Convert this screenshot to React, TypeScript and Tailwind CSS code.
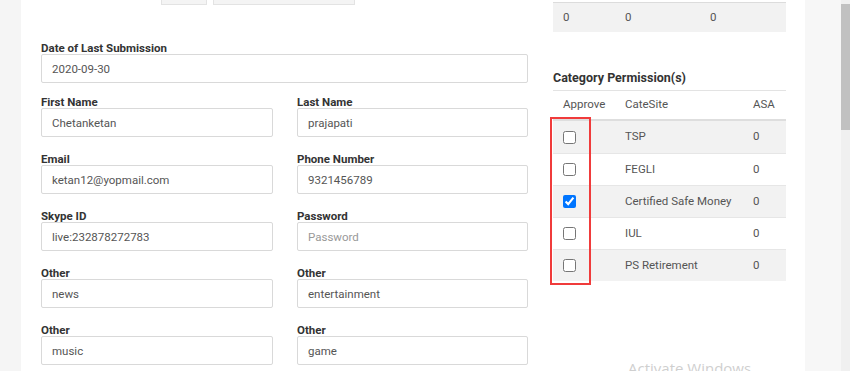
import React from "react";

type Field = { label: string; value?: string; placeholder?: string };

const pairs: [Field, Field][] = [
  [{ label: "First Name", value: "Chetanketan" }, { label: "Last Name", value: "prajapati" }],
  [{ label: "Email", value: "ketan12@yopmail.com" }, { label: "Phone Number", value: "9321456789" }],
  [{ label: "Skype ID", value: "live:232878272783" }, { label: "Password", placeholder: "Password" }],
  [{ label: "Other", value: "news" }, { label: "Other", value: "entertainment" }],
  [{ label: "Other", value: "music" }, { label: "Other", value: "game" }],
];

const categories = [
  { name: "TSP", asa: "0", checked: false },
  { name: "FEGLI", asa: "0", checked: false },
  { name: "Certified Safe Money", asa: "0", checked: true },
  { name: "IUL", asa: "0", checked: false },
  { name: "PS Retirement", asa: "0", checked: false },
];

function FormField({ field, className = "" }: { field: Field; className?: string }) {
  return (
    <div className={className}>
      <label className="block h-[15px] text-[11.5px] leading-[19px] font-bold text-[#333]">
        {field.label}
      </label>
      <input
        type={field.placeholder ? "password" : "text"}
        defaultValue={field.value}
        placeholder={field.placeholder}
        className="block w-full h-[29px] px-[10px] border border-[#d9d9d9] rounded-[2px] bg-white text-[11.5px] text-[#555] placeholder:text-[#999] outline-none"
      />
    </div>
  );
}

export default function App() {
  return (
    <div className="relative flex h-[371px] w-[850px] overflow-hidden bg-[#f5f5f5] font-['Roboto',sans-serif]">
      {/* left gutter */}
      <div className="w-[21px] shrink-0" />

      {/* main panel */}
      <div className="w-[784px] shrink-0 bg-white px-[20px] flex gap-[25px]">
        {/* form column */}
        <div className="w-[487px] shrink-0">
          <div className="flex h-[5px] pl-[120px] gap-[6px]">
            <div className="w-[46px] h-full bg-[#f4f4f4] border border-t-0 border-[#e3e3e3]" />
            <div className="w-[142px] h-full bg-[#f4f4f4] border border-t-0 border-[#e3e3e3]" />
          </div>

          <FormField
            field={{ label: "Date of Last Submission", value: "2020-09-30" }}
            className="mt-[34px]"
          />

          <div className="mt-[10px] flex flex-col gap-[13px]">
            {pairs.map(([a, b], i) => (
              <div key={i} className="flex gap-[24px]">
                <FormField field={a} className="w-[232px]" />
                <FormField field={b} className="w-[231px]" />
              </div>
            ))}
          </div>
        </div>

        {/* permissions column */}
        <div className="relative w-[233px] shrink-0 text-[11.5px] text-[#555]">
          <div className="h-[2px]" />
          <div className="flex h-[30px] items-center border-t border-[#dcdcdc] bg-[#f2f2f2]">
            <span className="w-[72px] pl-[10px]">0</span>
            <span className="w-[85px]">0</span>
            <span>0</span>
          </div>

          <h3 className="mt-[36px] h-[20px] text-[12.5px] leading-[20px] font-bold text-[#333]">
            Category Permission(s)
          </h3>

          <div className="mt-[2px] border-t border-[#e3e3e3]">
            <div className="flex h-[30px] items-center border-b-2 border-[#dedede]">
              <span className="w-[72px] pl-[10px]">Approve</span>
              <span className="w-[128px]">CateSite</span>
              <span>ASA</span>
            </div>
            {categories.map((c, i) => (
              <div
                key={c.name}
                className={`flex h-[32px] items-center ${i > 0 ? "border-t border-[#e6e6e6]" : ""} ${
                  i % 2 === 0 ? "bg-[#f2f2f2]" : "bg-white"
                }`}
              >
                <span className="w-[72px] pl-[10px] flex items-center">
                  <input type="checkbox" defaultChecked={c.checked} className="m-0 w-[13px] h-[13px]" />
                </span>
                <span className="w-[128px]">{c.name}</span>
                <span>{c.asa}</span>
              </div>
            ))}
          </div>

          {/* highlight box */}
          <div className="absolute left-[-3px] top-[117px] w-[41px] h-[168px] border-2 border-[#f03b3b]" />
        </div>
      </div>

      {/* right gray area + scrollbar */}
      <div className="w-[36px] shrink-0 bg-[#f7f7f7]" />
      <div className="w-[9px] shrink-0 bg-[#f0f0f0] pt-[4px]">
        <div className="h-[126px] bg-[#c1c1c1]" />
      </div>

      {/* windows watermark */}
      <div className="absolute left-[628px] top-[357px] text-[15px] leading-[22px] text-[#cfcfcf] font-['Open_Sans',sans-serif] whitespace-nowrap">
        Activate Windows
      </div>
    </div>
  );
}
